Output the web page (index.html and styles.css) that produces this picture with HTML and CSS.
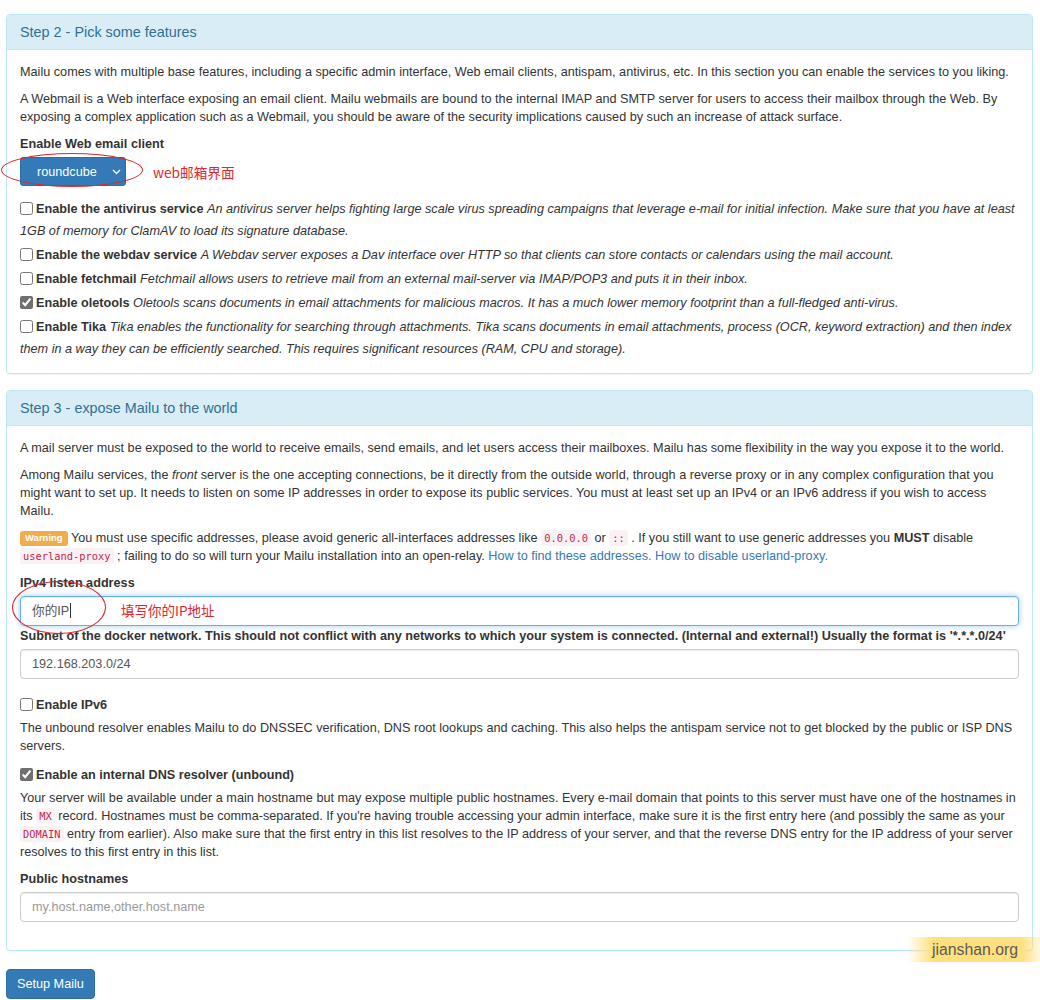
FILE: index.html
```html
<!DOCTYPE html>
<html lang="en">
<head>
  <meta charset="UTF-8">
  <title>Mailu setup</title>
  <link rel="stylesheet" href="styles.css">
</head>
<body>
  <div class="page">

    <div class="panel">
      <div class="panel-heading">
        <h3 class="panel-title">Step 2 - Pick some features</h3>
      </div>
      <div class="panel-body">
        <p>Mailu comes with multiple base features, including a specific admin interface, Web email clients, antispam, antivirus, etc. In this section you can enable the services to you liking.</p>
        <p>A Webmail is a Web interface exposing an email client. Mailu webmails are bound to the internal IMAP and SMTP server for users to access their mailbox through the Web. By exposing a complex application such as a Webmail, you should be aware of the security implications caused by such an increase of attack surface.</p>
        <div class="form-group form-group-select">
          <label class="control-label">Enable Web email client</label>
          <div class="select-row">
            <div class="select-wrap">
              <select class="btn-select">
                <option>roundcube</option>
              </select>
              <svg class="chevron" width="9" height="6" viewBox="0 0 9 6"><path d="M1 1l3.5 3.5L8 1" fill="none" stroke="#fff" stroke-width="1.4"/></svg>
            </div>
            <span class="note">web邮箱界面</span>
            <span class="ring ring-select"></span>
          </div>
        </div>
        <div class="checkbox"><label><input type="checkbox"><b>Enable the antivirus service</b> <i>An antivirus server helps fighting large scale virus spreading campaigns that leverage e-mail for initial infection. Make sure that you have at least 1GB of memory for ClamAV to load its signature database.</i></label></div>
        <div class="checkbox"><label><input type="checkbox"><b>Enable the webdav service</b> <i>A Webdav server exposes a Dav interface over HTTP so that clients can store contacts or calendars using the mail account.</i></label></div>
        <div class="checkbox"><label><input type="checkbox"><b>Enable fetchmail</b> <i>Fetchmail allows users to retrieve mail from an external mail-server via IMAP/POP3 and puts it in their inbox.</i></label></div>
        <div class="checkbox"><label><input type="checkbox" checked><b>Enable oletools</b> <i>Oletools scans documents in email attachments for malicious macros. It has a much lower memory footprint than a full-fledged anti-virus.</i></label></div>
        <div class="checkbox"><label><input type="checkbox"><b>Enable Tika</b> <i>Tika enables the functionality for searching through attachments. Tika scans documents in email attachments, process (OCR, keyword extraction) and then index them in a way they can be efficiently searched. This requires significant resources (RAM, CPU and storage).</i></label></div>
      </div>
    </div>

    <div class="panel">
      <div class="panel-heading">
        <h3 class="panel-title">Step 3 - expose Mailu to the world</h3>
      </div>
      <div class="panel-body">
        <p>A mail server must be exposed to the world to receive emails, send emails, and let users access their mailboxes. Mailu has some flexibility in the way you expose it to the world.</p>
        <p>Among Mailu services, the <i>front</i> server is the one accepting connections, be it directly from the outside world, through a reverse proxy or in any complex configuration that you might want to set up. It needs to listen on some IP addresses in order to expose its public services. You must at least set up an IPv4 or an IPv6 address if you wish to access Mailu.</p>
        <p><span class="label-warning">Warning</span> You must use specific addresses, please avoid generic all-interfaces addresses like <code>0.0.0.0</code> or <code>::</code> . If you still want to use generic addresses you <b>MUST</b> disable <code>userland-proxy</code> ; failing to do so will turn your Mailu installation into an open-relay. <a href="#">How to find these addresses.</a> <a href="#">How to disable userland-proxy.</a></p>

        <div class="form-group form-group-tight">
          <label class="control-label">IPv4 listen address</label>
          <div class="input-wrap">
            <div class="form-control is-focused">你的IP<span class="caret-line"></span></div>
            <span class="note note-input">填写你的IP地址</span>
            <span class="ring ring-input"></span>
          </div>
        </div>
        <div class="form-group">
          <label class="control-label">Subnet of the docker network. This should not conflict with any networks to which your system is connected. (Internal and external!) Usually the format is '*.*.*.0/24'</label>
          <input class="form-control" type="text" value="192.168.203.0/24">
        </div>

        <div class="checkbox checkbox-bold"><label><input type="checkbox"><b>Enable IPv6</b></label></div>
        <p>The unbound resolver enables Mailu to do DNSSEC verification, DNS root lookups and caching. This also helps the antispam service not to get blocked by the public or ISP DNS servers.</p>

        <div class="checkbox checkbox-bold"><label><input type="checkbox" checked><b>Enable an internal DNS resolver (unbound)</b></label></div>
        <p>Your server will be available under a main hostname but may expose multiple public hostnames. Every e-mail domain that points to this server must have one of the hostnames in its <code>MX</code> record. Hostnames must be comma-separated. If you're having trouble accessing your admin interface, make sure it is the first entry here (and possibly the same as your <code>DOMAIN</code> entry from earlier). Also make sure that the first entry in this list resolves to the IP address of your server, and that the reverse DNS entry for the IP address of your server resolves to this first entry in this list.</p>

        <div class="form-group">
          <label class="control-label">Public hostnames</label>
          <input class="form-control" type="text" placeholder="my.host.name,other.host.name">
        </div>
      </div>
    </div>

    <button class="btn-primary" type="submit">Setup Mailu</button>

    <div class="watermark">jianshan.org</div>
  </div>
</body>
</html>
```

FILE: styles.css
```css
body {
  margin: 0;
  font-family: "Liberation Sans", Arial, "Noto Sans CJK SC", sans-serif;
  font-size: 12.66px;
  line-height: 18px;
  color: #333;
  background-color: #fff;
}
.page {
  position: relative;
  padding: 14px 7px 2px 6px;
}
p {
  margin: 0 0 9px;
}
a {
  color: #337ab7;
  text-decoration: none;
}
code {
  font-family: "DejaVu Sans Mono", "Liberation Mono", monospace;
  font-size: 10.4px;
  padding: 2px 3px;
  color: #c7254e;
  background-color: #f9f2f4;
  border-radius: 3px;
}

/* panels */
.panel {
  border: 1px solid #bce8f1;
  border-radius: 4px;
  margin-bottom: 16px;
  box-shadow: 0 1px 1px rgba(0, 0, 0, 0.05);
}
.panel-heading {
  background-color: #d9edf7;
  color: #31708f;
  border-bottom: 1px solid #bce8f1;
  border-radius: 3px 3px 0 0;
  padding: 9px 13px;
}
.panel-title {
  margin: 0;
  font-size: 14.4px;
  font-weight: normal;
  line-height: 16px;
}
.panel-body {
  padding: 13px 13px;
}

/* form bits */
.form-group {
  margin-bottom: 15px;
}
.form-group-select {
  margin-bottom: 12px;
}
.form-group-tight {
  margin-bottom: 1px;
}
.control-label {
  display: block;
  font-weight: bold;
  margin-bottom: 4px;
}
.form-control {
  display: block;
  box-sizing: border-box;
  width: 100%;
  height: 30px;
  padding: 5px 11px;
  border: 1px solid #ccc;
  border-radius: 4px;
  font-family: inherit;
  font-size: 12.66px;
  line-height: 18px;
  color: #555;
  background-color: #fff;
  box-shadow: inset 0 1px 1px rgba(0, 0, 0, 0.075);
}
.form-control::placeholder {
  color: #999;
}
.form-control.is-focused {
  border-color: #66afe9;
  box-shadow: inset 0 1px 1px rgba(0, 0, 0, 0.075), 0 0 6px rgba(102, 175, 233, 0.6);
}
.caret-line {
  display: inline-block;
  width: 1px;
  height: 15px;
  margin-left: 1px;
  vertical-align: -3px;
  background-color: #333;
}

.select-row {
  position: relative;
  display: flex;
  align-items: center;
}
.select-wrap {
  position: relative;
}
.btn-select {
  appearance: none;
  -webkit-appearance: none;
  display: block;
  width: 106px;
  height: 29px;
  padding: 0 0 0 16px;
  border: 1px solid #2e6da4;
  border-radius: 3px;
  background-color: #337ab7;
  color: #fff;
  font-family: inherit;
  font-size: 12.66px;
}
.chevron {
  position: absolute;
  right: 5px;
  top: 12px;
  pointer-events: none;
}

.checkbox {
  line-height: 22px;
  margin-bottom: 2px;
}
.checkbox:last-child {
  margin-bottom: 0;
}
.checkbox input {
  width: 13px;
  height: 13px;
  margin: 0 3px 0 0;
  vertical-align: -2px;
  accent-color: #6f6f6f;
}
.checkbox-bold {
  margin: 1px 0 3px;
}

.label-warning {
  display: inline-block;
  padding: 1px 5px 2px;
  border-radius: 3px;
  background-color: #f0ad4e;
  color: #fff;
  font-size: 9.5px;
  font-weight: bold;
  line-height: 12px;
  vertical-align: 1px;
}

.btn-primary {
  display: inline-block;
  margin-top: 2px;
  padding: 5px 10px;
  border: 1px solid #2e6da4;
  border-radius: 4px;
  background-color: #337ab7;
  color: #fff;
  font-family: inherit;
  font-size: 12.66px;
  line-height: 18px;
}

/* red hand-drawn notes on top of the form */
.note {
  font-family: "Noto Sans CJK SC", sans-serif;
  color: #e0262a;
  font-size: 13.7px;
  margin-left: 27px;
}
.input-wrap {
  position: relative;
}
.note-input {
  position: absolute;
  left: 101px;
  top: 4px;
  margin: 0;
  font-size: 13.5px;
  line-height: 20px;
}
.ring {
  position: absolute;
  border: 1.5px solid #d92b2b;
  border-radius: 50%;
  pointer-events: none;
}
.ring-select {
  left: -19px;
  top: -4px;
  width: 140px;
  height: 32px;
}
.ring-input {
  left: -8px;
  top: -15px;
  width: 92px;
  height: 51px;
}

.watermark {
  position: absolute;
  right: 0;
  top: 937px;
  width: 108px;
  height: 25px;
  padding-left: 25px;
  font-size: 15.8px;
  line-height: 25px;
  color: #5a5a5a;
  background: linear-gradient(90deg, rgba(255, 222, 110, 0), #ffe07c 20%, #ffe07c 86%, rgba(255, 222, 110, 0.2));
}
```
